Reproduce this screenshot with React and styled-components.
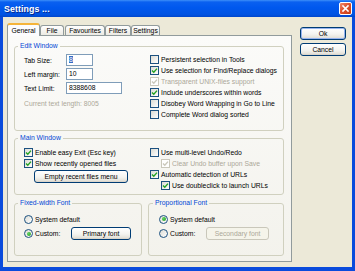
import React from "react";
import styled, { createGlobalStyle, css } from "styled-components";

const GlobalStyle = createGlobalStyle`
  html, body {
    margin: 0;
    padding: 0;
    background: #ffffff;
  }
  body {
    font-family: "Liberation Sans", Arial, sans-serif;
    font-size: 6.8px;
    color: #000000;
  }
  * {
    box-sizing: border-box;
  }
`;

const Window = styled.div`
  width: 355px;
  height: 271px;
  display: flex;
  flex-direction: column;
  background: #ece9d8;
  overflow: hidden;
`;

const TitleBar = styled.div`
  height: 17px;
  flex: none;
  display: flex;
  align-items: center;
  justify-content: space-between;
  padding: 0 3px 0 4px;
  background: linear-gradient(
    #3d8ff9 0,
    #0a60f0 2px,
    #0058ee 45%,
    #0053e2 85%,
    #0046cb 100%
  );
`;

const Title = styled.span`
  color: #ffffff;
  font-weight: bold;
  font-size: 8.8px;
  letter-spacing: 0.1px;
  text-shadow: 1px 1px 0 #0a2a8c;
`;

const CloseBox = styled.div`
  width: 13px;
  height: 13px;
  border: 1px solid #ffffff;
  border-radius: 2px;
  background: linear-gradient(135deg, #f08a6a 0%, #e0522e 45%, #c43c16 100%);
  display: flex;
  align-items: center;
  justify-content: center;
`;

const Frame = styled.div`
  flex: 1;
  display: flex;
  border: 3px solid #0a4bdc;
  border-top: none;
  border-bottom-width: 4px;
  padding: 6px 6px 5px 4px;
`;

const TabArea = styled.div`
  width: 285px;
  display: flex;
  flex-direction: column;
`;

const TabStrip = styled.div`
  height: 13px;
  display: flex;
  align-items: flex-end;
  margin-bottom: -1px;
  position: relative;
  z-index: 1;
`;

const Tab = styled.div`
  width: ${(p) => p.$w}px;
  height: 10px;
  margin-bottom: 1px;
  margin-right: ${(p) => p.$gap || 0}px;
  display: flex;
  align-items: center;
  justify-content: center;
  border: 1px solid #919b9c;
  border-bottom: none;
  border-radius: 3px 3px 0 0;
  background: linear-gradient(#ffffff, #eceae3);
  white-space: nowrap;

  ${(p) =>
    p.$active &&
    css`
      height: 13px;
      margin-bottom: 0;
      border-top: 2px solid #f5b43a;
      background: #fcfcfe;
      padding-bottom: 1px;
    `}
`;

const Panel = styled.div`
  height: 227px;
  border: 1px solid #919b9c;
  background: linear-gradient(#fbfbf9, #f3f2ec);
  padding: 6px 7px 0 6px;
  display: flex;
  flex-direction: column;
`;

const Group = styled.fieldset`
  margin: ${(p) => p.$top || 0}px 0 0 0;
  padding: ${(p) => p.$pad};
  border: 1px solid #d0d0bf;
  border-radius: 3px;
  min-width: 0;
  width: ${(p) => (p.$w ? `${p.$w}px` : "auto")};
`;

const Legend = styled.legend`
  padding: 0 2px;
  margin-left: -6px;
  line-height: 8px;
  color: #0046d5;
`;

const TwoCols = styled.div`
  display: grid;
  grid-template-columns: 126px 1fr;
`;

const Column = styled.div`
  display: flex;
  flex-direction: column;
  align-items: flex-start;
`;

const FieldRow = styled.div`
  display: flex;
  align-items: center;
  height: 12px;
  margin-bottom: 2px;
`;

const FieldLabel = styled.span`
  width: 42px;
`;

const TextBox = styled.div`
  width: ${(p) => p.$w}px;
  height: 12px;
  border: 1px solid #7f9db9;
  background: #ffffff;
  padding: 0 2px;
  line-height: 10px;
`;

const Selected = styled.span`
  background: #316ac5;
  color: #ffffff;
`;

const Hint = styled.div`
  margin-top: 4px;
  line-height: 8px;
  color: #aca899;
`;

const CheckRow = styled.div`
  height: 11px;
  display: flex;
  align-items: center;
  gap: 2px;
  margin-left: ${(p) => (p.$indent ? 11 : 0)}px;
  color: ${(p) => (p.$disabled ? "#aca899" : "#000000")};
  white-space: nowrap;
`;

const Box = styled.span`
  width: 9px;
  height: 9px;
  flex: none;
  border: 1px solid ${(p) => (p.$disabled ? "#cac8bb" : "#1c5180")};
  background: ${(p) =>
    p.$disabled ? "#ffffff" : "linear-gradient(135deg, #dcdcd4, #ffffff)"};
  display: flex;
  align-items: center;
  justify-content: center;
`;

const PushButton = styled.div`
  width: ${(p) => p.$w}px;
  height: 13px;
  flex: none;
  margin: ${(p) => p.$m || 0};
  display: flex;
  align-items: center;
  justify-content: center;
  border: 1px solid #003c74;
  border-radius: 3px;
  background: linear-gradient(#ffffff, #f4f4f0 55%, #e6e4dc 85%, #d6d0c5);
  white-space: nowrap;

  ${(p) =>
    p.$default &&
    css`
      box-shadow: inset 0 0 0 1px #97b4ee;
    `}

  ${(p) =>
    p.$disabled &&
    css`
      border-color: #c9c7ba;
      background: #f5f4ea;
      color: #aca899;
    `}
`;

const FontRow = styled.div`
  display: flex;
  gap: 6px;
  margin-top: 4px;
`;

const RadioRow = styled.div`
  height: ${(p) => p.$h}px;
  margin-top: ${(p) => p.$top || 0}px;
  display: flex;
  align-items: center;
  gap: 2px;
  white-space: nowrap;
`;

const Radio = styled.span`
  width: 9px;
  height: 9px;
  flex: none;
  border: 1px solid #1c5180;
  border-radius: 50%;
  background: linear-gradient(135deg, #dcdcd4, #ffffff);
  display: flex;
  align-items: center;
  justify-content: center;

  &::after {
    content: "";
    display: ${(p) => (p.$on ? "block" : "none")};
    width: 4px;
    height: 4px;
    border-radius: 50%;
    background: radial-gradient(circle at 35% 35%, #5fd25f, #1d9a1d);
  }
`;

const RadioText = styled.span`
  width: ${(p) => p.$w || "auto"};
`;

const SideButtons = styled.div`
  display: flex;
  flex-direction: column;
  gap: 3px;
  margin: 4px 0 0 8px;
`;

function Tick({ disabled }) {
  return (
    <svg width="7" height="7" viewBox="0 0 7 7">
      <polyline
        points="1,3.4 2.8,5.2 6,1.6"
        fill="none"
        stroke={disabled ? "#cac8bb" : "#21a121"}
        strokeWidth="1.4"
      />
    </svg>
  );
}

function Check({ label, checked, disabled, indent }) {
  return (
    <CheckRow $disabled={disabled} $indent={indent}>
      <Box $disabled={disabled}>{checked && <Tick disabled={disabled} />}</Box>
      {label}
    </CheckRow>
  );
}

const tabs = [
  { label: "General", w: 33, active: true },
  { label: "File", w: 24, gap: 1 },
  { label: "Favourites", w: 40 },
  { label: "Filters", w: 26 },
  { label: "Settings", w: 29 },
];

export default function App() {
  return (
    <>
      <GlobalStyle />
      <Window>
        <TitleBar>
          <Title>Settings ...</Title>
          <CloseBox>
            <svg width="9" height="9" viewBox="0 0 9 9">
              <path
                d="M2 2 L7 7 M7 2 L2 7"
                stroke="#ffffff"
                strokeWidth="1.6"
                strokeLinecap="square"
              />
            </svg>
          </CloseBox>
        </TitleBar>
        <Frame>
          <TabArea>
            <TabStrip>
              {tabs.map((t) => (
                <Tab key={t.label} $w={t.w} $gap={t.gap} $active={t.active}>
                  {t.label}
                </Tab>
              ))}
            </TabStrip>
            <Panel>
              <Group $pad="4px 8px 10px 9px">
                <Legend>Edit Window</Legend>
                <TwoCols>
                  <Column>
                    <FieldRow>
                      <FieldLabel>Tab Size:</FieldLabel>
                      <TextBox $w={27}>
                        <Selected>8</Selected>
                      </TextBox>
                    </FieldRow>
                    <FieldRow>
                      <FieldLabel>Left margin:</FieldLabel>
                      <TextBox $w={27}>10</TextBox>
                    </FieldRow>
                    <FieldRow>
                      <FieldLabel>Text Limit:</FieldLabel>
                      <TextBox $w={56}>8388608</TextBox>
                    </FieldRow>
                    <Hint>Current text length: 8005</Hint>
                  </Column>
                  <Column>
                    <Check label="Persistent selection in Tools" />
                    <Check label="Use selection for Find/Replace dialogs" checked />
                    <Check label="Transparent UNIX-files support" checked disabled />
                    <Check label="Include underscores within words" checked />
                    <Check label="Disobey Word Wrapping in Go to Line" />
                    <Check label="Complete Word dialog sorted" />
                  </Column>
                </TwoCols>
              </Group>

              <Group $top={3} $pad="5px 8px 3px 9px">
                <Legend>Main Window</Legend>
                <TwoCols>
                  <Column>
                    <Check label="Enable easy Exit (Esc key)" checked />
                    <Check label="Show recently opened files" checked />
                    <PushButton $w={94} $m="1px 0 0 10px">
                      Empty recent files menu
                    </PushButton>
                  </Column>
                  <Column>
                    <Check label="Use multi-level Undo/Redo" />
                    <Check label="Clear Undo buffer upon Save" checked disabled indent />
                    <Check label="Automatic detection of URLs" checked />
                    <Check label="Use doubleclick to launch URLs" checked indent />
                  </Column>
                </TwoCols>
              </Group>

              <FontRow>
                <Group $w={128} $pad="7px 6px 15px 9px">
                  <Legend>Fixed-width Font</Legend>
                  <RadioRow $h={10}>
                    <Radio />
                    System default
                  </RadioRow>
                  <RadioRow $h={13} $top={3}>
                    <Radio $on />
                    <RadioText $w="34px">Custom:</RadioText>
                    <PushButton $w={60}>Primary font</PushButton>
                  </RadioRow>
                </Group>
                <Group $w={136} $pad="7px 6px 15px 10px">
                  <Legend>Proportional Font</Legend>
                  <RadioRow $h={10}>
                    <Radio $on />
                    System default
                  </RadioRow>
                  <RadioRow $h={13} $top={3}>
                    <Radio />
                    <RadioText $w="34px">Custom:</RadioText>
                    <PushButton $w={63} $disabled>
                      Secondary font
                    </PushButton>
                  </RadioRow>
                </Group>
              </FontRow>
            </Panel>
          </TabArea>
          <SideButtons>
            <PushButton $w={46} $default>
              Ok
            </PushButton>
            <PushButton $w={46}>Cancel</PushButton>
          </SideButtons>
        </Frame>
      </Window>
    </>
  );
}
